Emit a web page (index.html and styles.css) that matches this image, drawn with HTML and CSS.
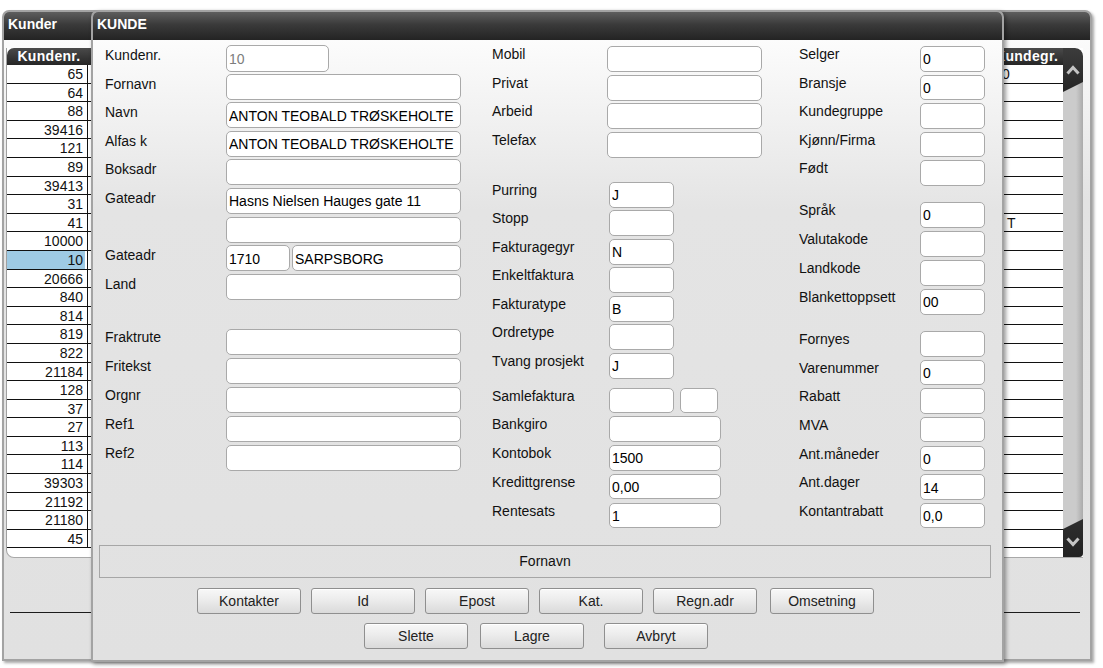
FILE: index.html
```html
<!DOCTYPE html>
<html>
<head>
<meta charset="utf-8">
<title>Kunder</title>
<link rel="stylesheet" href="styles.css">
</head>
<body>
<div class="win">
  <div class="titlebar">Kunder</div>
  <div class="win-body">
    <div class="grid">
      <div class="grid-main">
        <div class="ghead"><div class="c1">Kundenr.</div><div class="cmid"></div><div class="clast">Kundegr.</div></div>
        <div class="grow"><div class="c1">65</div><div class="cmid"></div><div class="clast"><span class="v0">0</span></div></div>
        <div class="grow"><div class="c1">64</div><div class="cmid"></div><div class="clast"></div></div>
        <div class="grow"><div class="c1">88</div><div class="cmid"></div><div class="clast"></div></div>
        <div class="grow"><div class="c1">39416</div><div class="cmid"></div><div class="clast"></div></div>
        <div class="grow"><div class="c1">121</div><div class="cmid"></div><div class="clast"></div></div>
        <div class="grow"><div class="c1">89</div><div class="cmid"></div><div class="clast"></div></div>
        <div class="grow"><div class="c1">39413</div><div class="cmid"></div><div class="clast"></div></div>
        <div class="grow"><div class="c1">31</div><div class="cmid"></div><div class="clast"></div></div>
        <div class="grow"><div class="c1">41</div><div class="cmid"></div><div class="clast"><span class="vt">T</span></div></div>
        <div class="grow"><div class="c1">10000</div><div class="cmid"></div><div class="clast"></div></div>
        <div class="grow sel"><div class="c1">10</div><div class="cmid"></div><div class="clast"></div></div>
        <div class="grow"><div class="c1">20666</div><div class="cmid"></div><div class="clast"></div></div>
        <div class="grow"><div class="c1">840</div><div class="cmid"></div><div class="clast"></div></div>
        <div class="grow"><div class="c1">814</div><div class="cmid"></div><div class="clast"></div></div>
        <div class="grow"><div class="c1">819</div><div class="cmid"></div><div class="clast"></div></div>
        <div class="grow"><div class="c1">822</div><div class="cmid"></div><div class="clast"></div></div>
        <div class="grow"><div class="c1">21184</div><div class="cmid"></div><div class="clast"></div></div>
        <div class="grow"><div class="c1">128</div><div class="cmid"></div><div class="clast"></div></div>
        <div class="grow"><div class="c1">37</div><div class="cmid"></div><div class="clast"></div></div>
        <div class="grow"><div class="c1">27</div><div class="cmid"></div><div class="clast"></div></div>
        <div class="grow"><div class="c1">113</div><div class="cmid"></div><div class="clast"></div></div>
        <div class="grow"><div class="c1">114</div><div class="cmid"></div><div class="clast"></div></div>
        <div class="grow"><div class="c1">39303</div><div class="cmid"></div><div class="clast"></div></div>
        <div class="grow"><div class="c1">21192</div><div class="cmid"></div><div class="clast"></div></div>
        <div class="grow"><div class="c1">21180</div><div class="cmid"></div><div class="clast"></div></div>
        <div class="grow"><div class="c1">45</div><div class="cmid"></div><div class="clast"></div></div>
      </div>
      <div class="sbar">
        <div class="sb-up"><svg width="14" height="10" viewBox="0 0 14 10"><polyline points="1.5,8.5 7,2.5 12.5,8.5" fill="none" stroke="#c4c4c4" stroke-width="3"/></svg></div>
        <div class="sb-track"></div>
        <div class="sb-down"><svg width="14" height="10" viewBox="0 0 14 10"><polyline points="1.5,1.5 7,7.5 12.5,1.5" fill="none" stroke="#c4c4c4" stroke-width="3"/></svg></div>
      </div>
    </div>
    <div class="sep"></div>
  </div>
</div>

<div class="modal">
  <div class="titlebar mtitle">KUNDE</div>
  <div class="mbody">
    <div class="form">
      <div class="col col1">
        <div class="grp g1a">
          <div class="row"><span class="lbl">Kundenr.</span><input class="in w103 dis" value="10" readonly></div>
          <div class="row"><span class="lbl">Fornavn</span><input class="in wfull" value=""></div>
          <div class="row"><span class="lbl">Navn</span><input class="in wfull" value="ANTON TEOBALD TRØSKEHOLTE"></div>
          <div class="row"><span class="lbl">Alfas k</span><input class="in wfull" value="ANTON TEOBALD TRØSKEHOLTE"></div>
          <div class="row"><span class="lbl">Boksadr</span><input class="in wfull" value=""></div>
          <div class="row"><span class="lbl">Gateadr</span><input class="in wfull" value="Hasns Nielsen Hauges gate 11"></div>
          <div class="row"><span class="lbl"></span><input class="in wfull" value=""></div>
          <div class="row"><span class="lbl">Gateadr</span><span class="pair"><input class="in w64" value="1710"><input class="in w168" value="SARPSBORG"></span></div>
          <div class="row"><span class="lbl">Land</span><input class="in wfull" value=""></div>
        </div>
        <div class="grp g1b">
          <div class="row"><span class="lbl">Fraktrute</span><input class="in wfull" value=""></div>
          <div class="row"><span class="lbl">Fritekst</span><input class="in wfull" value=""></div>
          <div class="row"><span class="lbl">Orgnr</span><input class="in wfull" value=""></div>
          <div class="row"><span class="lbl">Ref1</span><input class="in wfull" value=""></div>
          <div class="row"><span class="lbl">Ref2</span><input class="in wfull" value=""></div>
        </div>
      </div>

      <div class="col col2">
        <div class="grp g2a">
          <div class="row"><span class="lbl">Mobil</span><input class="in w155" value=""></div>
          <div class="row"><span class="lbl">Privat</span><input class="in w155" value=""></div>
          <div class="row"><span class="lbl">Arbeid</span><input class="in w155" value=""></div>
          <div class="row"><span class="lbl">Telefax</span><input class="in w155" value=""></div>
        </div>
        <div class="grp g2b">
          <div class="row"><span class="lbl">Purring</span><input class="in w65" value="J"></div>
          <div class="row"><span class="lbl">Stopp</span><input class="in w65" value=""></div>
          <div class="row"><span class="lbl">Fakturagegyr</span><input class="in w65" value="N"></div>
          <div class="row"><span class="lbl">Enkeltfaktura</span><input class="in w65" value=""></div>
          <div class="row"><span class="lbl">Fakturatype</span><input class="in w65" value="B"></div>
          <div class="row"><span class="lbl">Ordretype</span><input class="in w65" value=""></div>
          <div class="row"><span class="lbl">Tvang prosjekt</span><input class="in w65" value="J"></div>
        </div>
        <div class="grp g2c">
          <div class="row"><span class="lbl">Samlefaktura</span><span class="pair wide"><input class="in w65" value=""><input class="in w38" value=""></span></div>
          <div class="row"><span class="lbl">Bankgiro</span><input class="in w112" value=""></div>
          <div class="row"><span class="lbl">Kontobok</span><input class="in w112" value="1500"></div>
          <div class="row"><span class="lbl">Kredittgrense</span><input class="in w112" value="0,00"></div>
          <div class="row"><span class="lbl">Rentesats</span><input class="in w112" value="1"></div>
        </div>
      </div>

      <div class="col col3">
        <div class="grp g3a">
          <div class="row"><span class="lbl">Selger</span><input class="in w65" value="0"></div>
          <div class="row"><span class="lbl">Bransje</span><input class="in w65" value="0"></div>
          <div class="row"><span class="lbl">Kundegruppe</span><input class="in w65" value=""></div>
          <div class="row"><span class="lbl">Kjønn/Firma</span><input class="in w65" value=""></div>
          <div class="row"><span class="lbl">Født</span><input class="in w65" value=""></div>
        </div>
        <div class="grp g3b">
          <div class="row"><span class="lbl">Språk</span><input class="in w65" value="0"></div>
          <div class="row"><span class="lbl">Valutakode</span><input class="in w65" value=""></div>
          <div class="row"><span class="lbl">Landkode</span><input class="in w65" value=""></div>
          <div class="row"><span class="lbl">Blankettoppsett</span><input class="in w65" value="00"></div>
        </div>
        <div class="grp g3c">
          <div class="row"><span class="lbl">Fornyes</span><input class="in w65" value=""></div>
          <div class="row"><span class="lbl">Varenummer</span><input class="in w65" value="0"></div>
          <div class="row"><span class="lbl">Rabatt</span><input class="in w65" value=""></div>
          <div class="row"><span class="lbl">MVA</span><input class="in w65" value=""></div>
          <div class="row"><span class="lbl">Ant.måneder</span><input class="in w65" value="0"></div>
          <div class="row"><span class="lbl">Ant.dager</span><input class="in w65" value="14"></div>
          <div class="row"><span class="lbl">Kontantrabatt</span><input class="in w65" value="0,0"></div>
        </div>
      </div>
    </div>

    <div class="status">Fornavn</div>

    <div class="btnrow r1">
      <button class="btn">Kontakter</button>
      <button class="btn">Id</button>
      <button class="btn">Epost</button>
      <button class="btn">Kat.</button>
      <button class="btn">Regn.adr</button>
      <button class="btn wider">Omsetning</button>
    </div>
    <div class="btnrow r2">
      <button class="btn">Slette</button>
      <button class="btn">Lagre</button>
      <button class="btn extra">Avbryt</button>
    </div>
  </div>
</div>
</body>
</html>
```

FILE: styles.css
```css
* { box-sizing: border-box; }

html, body {
  margin: 0;
  padding: 0;
  background: #ffffff;
  font-family: "Liberation Sans", Arial, sans-serif;
  font-size: 14px;
  color: #111;
}

body {
  position: relative;
  width: 1103px;
  height: 668px;
  overflow: hidden;
}

/* ---------- background window ---------- */
.win {
  margin: 10px 0 0 2px;
  width: 1090px;
  height: 651px;
  border: 2px solid #a3a3a3;
  border-radius: 7px 7px 0 0;
  box-shadow: 2px 2px 3px rgba(0, 0, 0, 0.35);
  background: #e1e1e1;
  display: flex;
  flex-direction: column;
}

.titlebar {
  height: 28px;
  flex: none;
  padding: 3px 0 0 4px;
  line-height: 18px;
  font-weight: bold;
  font-size: 14px;
  color: #fff;
  background: linear-gradient(#5e5e5e 0, #3a3a3a 45%, #232323 100%);
  border-radius: 5px 5px 0 0;
}

.win-body {
  flex: 1;
  padding: 8px 7px 0 2px;
  background: linear-gradient(#fbfbfb 0, #e3e3e3 160px, #e1e1e1 100%);
}

.grid {
  display: flex;
  height: 510px;
  border-left: 1px solid #a0a0a0;
  border-bottom: 1px solid #a8a8a8;
  border-bottom-left-radius: 8px;
  background: #fff;
}

.grid-main {
  width: 1056px;
  display: flex;
  flex-direction: column;
}

.ghead {
  display: flex;
  height: 17px;
  line-height: 17px;
  font-weight: bold;
  color: #fff;
  background: linear-gradient(#4a4a4a, #262626);
  border-top-left-radius: 7px;
}

.ghead .c1 {
  text-align: center;
  border-right: 0;
  padding: 0 0 0 3px;
  letter-spacing: 0.3px;
}

.ghead .clast { padding-left: 0; letter-spacing: 0.3px; }

.grow {
  display: flex;
  height: 18.6px;
  line-height: 18px;
  border-bottom: 1px solid #111;
}

.c1 {
  width: 81px;
  flex: none;
  text-align: right;
  padding-right: 4px;
  border-right: 1px solid #111;
}

.grow.sel .c1 {
  background: linear-gradient(to right, #9ecae4 97%, #fff 97%);
}

.cmid { width: 907px; flex: none; }

.clast {
  width: 68px;
  flex: none;
  padding-left: 0;
  white-space: nowrap;
}

.v0 { padding-left: 7px; }
.vt { padding-left: 12px; }

.sbar {
  width: 20px;
  display: flex;
  flex-direction: column;
  background: linear-gradient(to right, #cbcbcb 0, #cbcbcb 65%, #ababab 100%);
  border-top-right-radius: 8px;
  border-bottom-right-radius: 4px;
  overflow: hidden;
}

.sb-up {
  height: 44px;
  background: linear-gradient(#3c3c3c, #252525);
  display: flex;
  align-items: center;
  justify-content: center;
  padding-bottom: 0;
  border-top-right-radius: 8px;
  clip-path: polygon(0 0, 100% 0, 100% 34px, 0 44px);
}

.sb-track { flex: 1; }

.sb-down {
  height: 38px;
  background: linear-gradient(#2e2e2e, #222);
  display: flex;
  align-items: center;
  justify-content: center;
  padding-top: 8px;
  clip-path: polygon(0 10px, 100% 0, 100% 100%, 0 100%);
}

.sep {
  margin: 54px 3px 0 4px;
  border-top: 1px solid #1c1c1c;
}

/* ---------- modal ---------- */
.modal {
  position: absolute;
  left: 91px;
  top: 10px;
  width: 913px;
  height: 652px;
  border: 2px solid #a3a3a3;
  border-radius: 7px 7px 0 0;
  box-shadow: 2px 2px 4px rgba(0, 0, 0, 0.4);
  background: #e1e1e1;
  display: flex;
  flex-direction: column;
}

.mtitle { padding-left: 4px; }

.mbody {
  flex: 1;
  background: linear-gradient(#fcfcfc 0, #e4e4e4 170px, #e1e1e1 100%);
}

.form {
  height: 505px;
  display: flex;
  padding-left: 12px;
}

.col { display: flex; flex-direction: column; }
.col1 { width: 356px; }
.col2 { width: 270px; margin-left: 31px; }
.col3 { width: 186px; margin-left: 37px; }

.grp { display: flex; flex-direction: column; }
.row {
  display: flex;
  align-items: flex-start;
  height: var(--p);
  flex: none;
}

.g1a { --p: 28.6px; margin-top: 5px; }
.g1b { --p: 29px; margin-top: 26.6px; }
.g2a { --p: 28.5px; margin-top: 6px; }
.g2b { --p: 28.5px; margin-top: 21.6px; }
.g2c { --p: 28.75px; margin-top: 6.5px; }
.g3a { --p: 28.5px; margin-top: 6px; }
.g3b { --p: 29px; margin-top: 13.5px; }
.g3c { --p: 28.67px; margin-top: 13px; }

.lbl {
  flex: none;
  line-height: 18px;
  padding-top: 1px;
  white-space: nowrap;
  color: #111;
}
.col2 .lbl, .col3 .lbl, .g1b .lbl { padding-top: 0; margin-top: -1px; }
.col1 .lbl { width: 121px; }
.col3 .lbl { width: 121px; }
.g2a .lbl { width: 115px; }
.g2b .lbl, .g2c .lbl { width: 117px; }

.in {
  height: 26px;
  margin: 0;
  padding: 1px 2px 0 2px;
  border: 1px solid #a9a9a9;
  border-radius: 5px;
  background: #fff;
  font-family: "Liberation Sans", Arial, sans-serif;
  font-size: 14px;
  color: #000;
  outline: none;
}
.g2c .in, .col3 .in { height: 25.5px; }
.w103 { height: 27px; }
.dis { color: #7d7d7d; }

.wfull { width: 235px; }
.w103 { width: 103px; }
.w64 { width: 64px; }
.w168 { width: 169px; }
.w155 { width: 155px; }
.w65 { width: 65px; }
.w38 { width: 38px; }
.w112 { width: 112px; }

.pair { display: flex; gap: 2px; }
.pair.wide { gap: 6px; }

.status {
  margin-left: 6px;
  width: 892px;
  height: 33px;
  border: 1px solid #a6a6a6;
  text-align: center;
  line-height: 31px;
  color: #111;
}

.btnrow { display: flex; gap: 10px; }
.r1 { margin-top: 10px; padding-left: 104px; }
.r1 .wider { margin-left: 3px; }
.r2 { margin-top: 9px; padding-left: 271px; gap: 12px; }
.r2 .extra { margin-left: 8px; }

.btn {
  width: 104px;
  height: 26px;
  margin: 0;
  padding: 0;
  border: 1px solid #8f8f8f;
  border-radius: 3px;
  background: linear-gradient(#f8f8f8 0, #ececec 45%, #dadada 100%);
  box-shadow: inset 0 1px 0 #fff;
  font-family: "Liberation Sans", Arial, sans-serif;
  font-size: 14px;
  color: #222;
}
```
